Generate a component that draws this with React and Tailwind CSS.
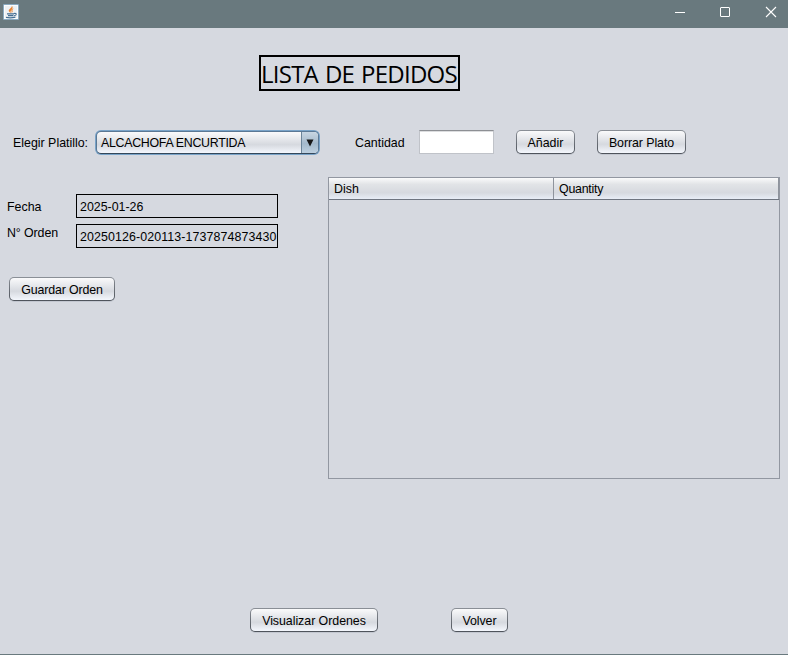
import React from "react";

function Button({ className, children }) {
  return (
    <button
      className={`flex h-[24px] shrink-0 items-center justify-center whitespace-nowrap rounded-[5px] bg-gradient-to-b from-[#8b9097] to-[#4e535b] p-px shadow-[0_1px_0_#c3c7d0] ${className}`}
    >
      <span className="flex h-full w-full items-center justify-center rounded-[4px] bg-[linear-gradient(#fafafb_0%,#e5e7eb_35%,#d6d9df_60%,#e1e4ea_75%,#f4f7fd_100%)] pt-[2px]">
        {children}
      </span>
    </button>
  );
}

function JavaIcon() {
  return (
    <svg width="16" height="16" viewBox="0 0 16 16" fill="none">
      <rect x="0.5" y="0.5" width="15" height="15" rx="0.5" fill="#edf1f4" stroke="#88a9c0" />
      <rect x="1.5" y="1.5" width="13" height="13" stroke="#fafcfd" />
      <path d="M8.8 1.4C9.5 4 4.9 4.9 5.9 7.2L7.8 9.4C7.1 7.6 7.9 6.4 9 5.2C10 4.1 9.7 2.6 8.8 1.4Z" fill="#e8822e" />
      <path d="M11 4.6C8.6 5.4 8 6.2 8.6 7.4C8.9 8 8.6 8.6 8.1 9.3C10 8.3 9.7 7.3 9.4 6.6C9.2 5.9 10 5.3 11 4.6Z" fill="#e8822e" />
      <path d="M4 9.8H11M5 11.6H10.4M3 13.4Q7.5 14.4 12.4 13.2" stroke="#456f92" strokeWidth="1.2" />
      <path d="M11 9.5C14.2 8.9 13.8 11.4 11 11.8" stroke="#456f92" strokeWidth="1.1" />
    </svg>
  );
}

function TitleBar() {
  return (
    <header className="flex h-[28px] items-start justify-between bg-[#69797e]">
      <div className="pl-[3px] pt-[4px]">
        <JavaIcon />
      </div>
      <svg width="113" height="28" viewBox="0 0 113 28" fill="none" stroke="#fff">
        <path d="M0 12.5H10" />
        <rect x="45.5" y="7.5" width="9" height="9" rx="0.5" />
        <path d="M91 7L101 17M101 7L91 17" strokeWidth="1.1" />
      </svg>
    </header>
  );
}

export default function App() {
  return (
    <div className="flex h-[655px] w-[788px] flex-col overflow-hidden border-b border-[#69797e] bg-[#d6d9e0] font-['Liberation_Sans',Arial,sans-serif] text-[12.4px] leading-[14px] text-black">
      <TitleBar />

      <h1 className="ml-[259px] mt-[27px] flex h-[36px] w-[201px] items-center whitespace-nowrap border-2 border-black pt-px font-['Open_Sans','Noto_Sans',sans-serif] text-[24px] leading-[32px] tracking-[-0.75px] [word-spacing:1.4px]">
        LISTA DE PEDIDOS
      </h1>

      <div className="mt-[38px] flex h-[26px] items-start pl-[13px]">
        <label className="w-[82px] shrink-0 whitespace-nowrap pt-[7px]">Elegir Platillo:</label>
        <div className="mt-px flex h-[25px] w-[225px] shrink-0 rounded-[6px] bg-[#79a3c8] p-[1px]">
          <div className="flex w-full overflow-hidden rounded-[5px] border border-[#5b7894] border-b-[#34475a] bg-[linear-gradient(#fafafb_0%,#e5e7eb_35%,#d6d9df_60%,#e1e4ea_75%,#f4f7fd_100%)]">
            <span className="flex flex-1 items-center whitespace-nowrap pl-[4px] tracking-[-0.3px]">ALCACHOFA ENCURTIDA</span>
            <span className="flex w-[17px] items-center justify-center border-l border-[#6b8499] bg-[linear-gradient(#c8d6e2,#a4b9cb_55%,#bdd0e0)]">
              <svg width="8" height="8" viewBox="0 0 8 8">
                <path d="M0.5 0.5H7.5L4 7.5Z" fill="#171717" />
              </svg>
            </span>
          </div>
        </div>
        <label className="ml-[35px] w-[64px] shrink-0 pt-[7px]">Cantidad</label>
        <input className="mt-px h-[24px] w-[75px] shrink-0 border border-[#c0c3c9] border-t-[#8d8f94] bg-white shadow-[inset_0_1px_0_#dcdddf] outline-none" />
        <Button className="ml-[22px] mt-px w-[59px]">Añadir</Button>
        <Button className="ml-[22px] mt-px w-[89px] tracking-[-0.08px]">Borrar Plato</Button>
      </div>

      <main className="mt-[22px] flex h-[302px] items-start">
        <section className="w-[328px] shrink-0 pt-[17px]">
          <div className="flex h-[24px] items-center pl-[7px]">
            <span className="w-[69px] pt-px">Fecha</span>
            <div className="flex h-[24px] w-[202px] items-center border border-black pl-[3px] pt-px">
              2025-01-26
            </div>
          </div>
          <div className="mt-[6px] flex h-[24px] items-start pl-[7px]">
            <span className="w-[69px] pt-[2px] tracking-[-0.1px]">N° Orden</span>
            <div className="flex h-[24px] w-[202px] items-center overflow-hidden whitespace-nowrap border border-black pl-[3px] pt-px tracking-[0.11px]">
              20250126-020113-1737874873430
            </div>
          </div>
          <Button className="ml-[9px] mt-[29px] w-[106px] tracking-[-0.13px]">Guardar Orden</Button>
        </section>

        <section className="h-[302px] w-[452px] shrink-0 border border-[#9297a1]">
          <div className="flex h-[22px] border-b border-[#6f7580] bg-[linear-gradient(#fafafb_0%,#e2e4e7_30%,#d6d9df_70%,#e8edf6_100%)]">
            <div className="flex w-[225px] items-center border-r border-[#8f949d] pl-[5px] pt-px">Dish</div>
            <div className="flex flex-1 items-center border-r border-[#8f949d] pl-[5px] pt-px tracking-[-0.25px]">Quantity</div>
          </div>
        </section>
      </main>

      <footer className="mt-[129px] flex pl-[250px]">
        <Button className="w-[128px] tracking-[-0.04px]">Visualizar Ordenes</Button>
        <Button className="ml-[73px] w-[57px] tracking-[-0.1px]">Volver</Button>
      </footer>
    </div>
  );
}
